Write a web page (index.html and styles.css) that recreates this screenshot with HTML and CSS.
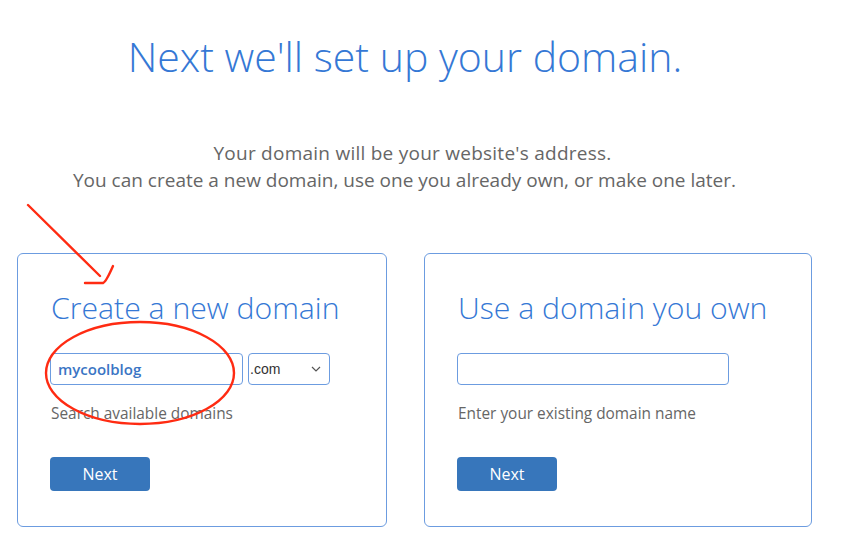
FILE: index.html
```html
<!DOCTYPE html>
<html lang="en">
  <head>
    <meta charset="UTF-8" />
    <meta name="viewport" content="width=device-width, initial-scale=1.0" />
    <title>Domain setup</title>
    <link rel="stylesheet" href="styles.css">
  </head>
  <body>
    <section class="page">
      <h1 class="title">Next we'll set up your domain.</h1>
      <p class="intro">
        <span class="intro-line intro-first">Your domain will be your website's address.</span>
        <span class="intro-line">You can create a new domain, use one you already own, or make one later.</span>
      </p>

      <div class="cards">
        <div class="card card-new">
          <h2 class="card-title">Create a new domain</h2>
          <div class="field-row">
            <input class="field field-name" type="text" value="mycoolblog" />
            <div class="tld">
              <span>.com</span>
              <svg width="10" height="6" viewBox="0 0 10 6"><path d="M1 1l4 4 4-4" fill="none" stroke="#555" stroke-width="1.2" /></svg>
            </div>
          </div>
          <p class="hint">Search available domains</p>
          <a href="javascript:;" class="btn">Next</a>
        </div>

        <div class="card card-own">
          <h2 class="card-title">Use a domain you own</h2>
          <div class="field-row">
            <input class="field field-own" type="text" value="" />
          </div>
          <p class="hint">Enter your existing domain name</p>
          <a href="javascript:;" class="btn">Next</a>
        </div>
      </div>

      <!-- red marker drawn over the screenshot -->
      <svg class="marks" width="850" height="545" viewBox="0 0 850 545">
        <g fill="none" stroke="#ff2b12" stroke-width="2.4" stroke-linecap="round">
          <path d="M28 205 L100 276" />
          <path d="M85 283 L103 283 Q106 282 113 266" />
          <ellipse cx="140" cy="373" rx="94" ry="51" />
        </g>
      </svg>
    </section>
  </body>
</html>
```

FILE: styles.css
```css
* {
  margin: 0;
  padding: 0;
  box-sizing: border-box;
}
body {
  font-family: "Open Sans", "Liberation Sans", sans-serif;
  background: #fff;
}
.page {
  position: relative;
  width: 850px;
  height: 545px;
  overflow: hidden;
}
.title {
  font-weight: 300;
  font-size: 41px;
  line-height: 56px;
  color: #3578d5;
  text-align: center;
  padding-top: 28px;
  padding-right: 40px;
}
.intro {
  margin-top: 56px;
  font-size: 19px;
  line-height: 27px;
  color: #666;
  text-align: center;
  padding-right: 41px;
}
.intro-line {
  display: block;
}
.intro-first {
  padding-left: 16px;
  letter-spacing: 0.25px;
}
.cards {
  display: grid;
  grid-template-columns: 370px 388px;
  column-gap: 37px;
  margin-top: 59px;
  margin-left: 17px;
}
.card {
  height: 274px;
  border: 1px solid #6c9ce0;
  border-radius: 6px;
  padding: 34px 0 0 33px;
}
.card-title {
  font-weight: 300;
  font-size: 30.2px;
  line-height: 40px;
  color: #3578d5;
}
.field-row {
  display: flex;
  gap: 5px;
  margin-top: 25px;
  margin-left: -1px;
}
.field {
  height: 32px;
  border: 1px solid #6c9ce0;
  border-radius: 4px;
  font-family: "Open Sans", sans-serif;
  font-size: 15px;
  font-weight: 600;
  color: #3a75c4;
  padding: 0 7px;
  outline: none;
}
.field-name {
  width: 193px;
}
.field-own {
  width: 272px;
}
.tld {
  width: 82px;
  height: 32px;
  border: 1px solid #6c9ce0;
  border-radius: 4px;
  display: flex;
  align-items: center;
  justify-content: space-between;
  padding: 0 8px 0 1px;
  font-family: "Liberation Sans", sans-serif;
  font-size: 14px;
  color: #333;
}
.hint {
  margin-top: 18px;
  font-size: 15.4px;
  line-height: 22px;
  color: #666;
}
.btn {
  display: block;
  width: 100px;
  height: 34px;
  margin-top: 32px;
  margin-left: -1px;
  background: #3776bb;
  border-radius: 4px;
  color: #fff;
  text-decoration: none;
  text-align: center;
  font-size: 16px;
  line-height: 34px;
}
.marks {
  position: absolute;
  left: 0;
  top: 0;
  pointer-events: none;
}
```
